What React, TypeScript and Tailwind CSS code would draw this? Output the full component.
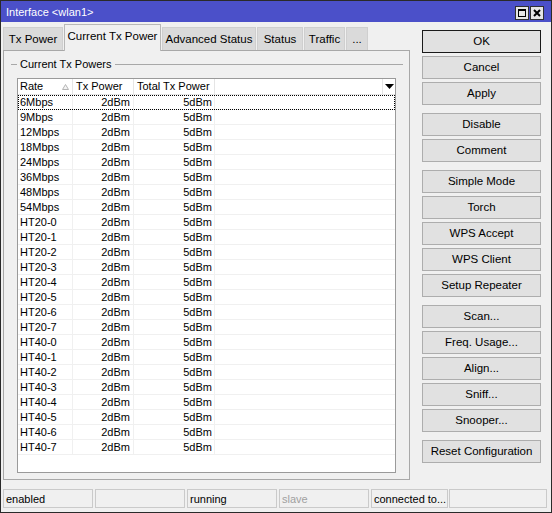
import React from "react";

const rows: string[] = [
  "6Mbps", "9Mbps", "12Mbps", "18Mbps", "24Mbps", "36Mbps", "48Mbps", "54Mbps",
  "HT20-0", "HT20-1", "HT20-2", "HT20-3", "HT20-4", "HT20-5", "HT20-6", "HT20-7",
  "HT40-0", "HT40-1", "HT40-2", "HT40-3", "HT40-4", "HT40-5", "HT40-6", "HT40-7",
];

const groups: string[][] = [
  ["OK", "Cancel", "Apply"],
  ["Disable", "Comment"],
  ["Simple Mode", "Torch", "WPS Accept", "WPS Client", "Setup Repeater"],
  ["Scan...", "Freq. Usage...", "Align...", "Sniff...", "Snooper..."],
  ["Reset Configuration"],
];

function Btn({ label }: { label: string }) {
  const ok = label === "OK";
  return (
    <div
      className={
        ok
          ? "h-[23px] w-full border border-[#1a1a1a] bg-[#e1e1e1] flex items-center justify-center pt-px text-black whitespace-nowrap"
          : "h-[23px] w-full border border-[#adadad] bg-[#e1e1e1] flex items-center justify-center pt-px text-black whitespace-nowrap"
      }
    >
      {label}
    </div>
  );
}

export default function App() {
  return (
    <div className="w-[552px] h-[513px] bg-[#f0f0f0] border border-[#2a2a2a] flex flex-col overflow-hidden text-[11px] text-black font-['Liberation_Sans',Arial,sans-serif] leading-none whitespace-nowrap">
      {/* Title bar */}
      <div className="h-[21px] bg-[#4b50c9] flex items-center pl-[5px] pr-[7px] shrink-0">
        <span className="text-white text-[11px] mt-px">Interface &lt;wlan1&gt;</span>
        <div className="ml-auto flex gap-px mt-[3px]">
          <div className="w-[14px] h-[14px] bg-[#e6e6e6] border border-[#303030] flex items-center justify-center">
            <div className="w-[8px] h-[8px] border border-black border-t-2" />
          </div>
          <div className="w-[14px] h-[14px] bg-[#e6e6e6] border border-[#303030] flex items-center justify-center">
            <svg width="8" height="8" viewBox="0 0 8 8">
              <path d="M1 1 L7 7 M7 1 L1 7" stroke="#000" strokeWidth="2" />
            </svg>
          </div>
        </div>
      </div>

      {/* Body */}
      <div className="h-[464px] flex shrink-0">
        {/* Left: tabs + panel */}
        <div className="ml-[2px] w-[407px] flex flex-col pt-[2px]">
          <div className="flex items-end gap-px h-[26px] text-[11.5px]">
            <div className="w-[60px] h-[23px] bg-[#dadada] border border-b-0 border-[#cfcfcf] flex items-center justify-center pt-px">Tx Power</div>
            <div className="w-[97px] h-[27px] -mb-px relative z-10 bg-[#f0f0f0] border border-b-0 border-[#b8b8b8] flex items-center justify-center pb-[2px]">Current Tx Power</div>
            <div className="w-[94px] h-[23px] bg-[#dadada] border border-b-0 border-[#cfcfcf] flex items-center justify-center pt-px">Advanced Status</div>
            <div className="w-[46px] h-[23px] bg-[#dadada] border border-b-0 border-[#cfcfcf] flex items-center justify-center pt-px">Status</div>
            <div className="w-[41px] h-[23px] bg-[#dadada] border border-b-0 border-[#cfcfcf] flex items-center justify-center pt-px">Traffic</div>
            <div className="w-[22px] h-[23px] bg-[#dadada] border border-b-0 border-[#cfcfcf] flex items-center justify-center pt-px">...</div>
          </div>
          <div className="h-[430px] border border-[#a8a8a8] bg-[#f0f0f0] flex flex-col">
            {/* group legend */}
            <div className="mt-[6px] h-[14px] flex items-center pl-[7px] pr-[6px]">
              <div className="w-[6px] h-px bg-[#a8a8a8]" />
              <span className="px-[3px]">Current Tx Powers</span>
              <div className="flex-1 h-px bg-[#a8a8a8]" />
            </div>
            {/* table */}
            <div className="mt-[7px] ml-[13px] w-[379px] h-[395px] border border-[#9a9a9a] bg-white flex flex-col">
              <div className="h-[16px] flex border-b border-[#e5e5e5] shrink-0">
                <div className="w-[55px] border-r border-[#e5e5e5] flex items-center pl-[2px]">
                  <span>Rate</span>
                  <svg className="ml-auto mr-[3px]" width="7" height="6" viewBox="0 0 7 6">
                    <polygon points="3.5,0.5 6.5,5.5 0.5,5.5" fill="#f4f4f4" stroke="#b4b4b4" strokeWidth="1" />
                  </svg>
                </div>
                <div className="w-[61px] border-r border-[#e5e5e5] flex items-center pl-[3px]">Tx Power</div>
                <div className="w-[81px] border-r border-[#e5e5e5] flex items-center pl-[3px]">Total Tx Power</div>
                <div className="flex-1" />
                <div className="w-[13px] border-l border-[#e5e5e5] flex items-center justify-center">
                  <svg width="9" height="5" viewBox="0 0 9 5">
                    <polygon points="0,0 9,0 4.5,5" fill="#000" />
                  </svg>
                </div>
              </div>
              {rows.map((r, i) => (
                <div
                  key={r}
                  className={
                    i === 0
                      ? "h-[15px] flex border-b border-[#f0f0f0] shrink-0 outline-1 outline-dotted outline-black -outline-offset-1"
                      : "h-[15px] flex border-b border-[#f0f0f0] shrink-0"
                  }
                >
                  <div className="w-[55px] border-r border-[#f0f0f0] flex items-center pl-[2px]">{r}</div>
                  <div className="w-[61px] border-r border-[#f0f0f0] flex items-center justify-end pr-[3px]">2dBm</div>
                  <div className="w-[81px] border-r border-[#f0f0f0] flex items-center justify-end pr-[2px]">5dBm</div>
                  <div className="flex-1" />
                </div>
              ))}
            </div>
          </div>
        </div>

        {/* Right: buttons */}
        <div className="ml-[12px] w-[119px] pt-[8px] flex flex-col gap-[8px] text-[11.5px]">
          {groups.map((g, gi) => (
            <div key={gi} className="flex flex-col gap-[3px]">
              {g.map((b) => (
                <Btn key={b} label={b} />
              ))}
            </div>
          ))}
        </div>
      </div>

      {/* Status bar */}
      <div className="mt-[3px] h-[19px] ml-[2px] flex shrink-0">
        <div className="w-[90px] border border-[#cacaca] flex items-center pl-[2px] pt-px">enabled</div>
        <div className="ml-[2px] w-[90px] border border-[#cacaca]" />
        <div className="ml-[2px] w-[90px] border border-[#cacaca] flex items-center pl-[2px] pt-px">running</div>
        <div className="ml-[2px] w-[90px] border border-[#cacaca] flex items-center pl-[2px] pt-px text-[#a0a0a0]">slave</div>
        <div className="ml-[2px] w-[77px] border border-[#cacaca] flex items-center pl-[2px] pt-px">connected to...</div>
        <div className="ml-px w-[98px] border border-[#cacaca]" />
      </div>
    </div>
  );
}
